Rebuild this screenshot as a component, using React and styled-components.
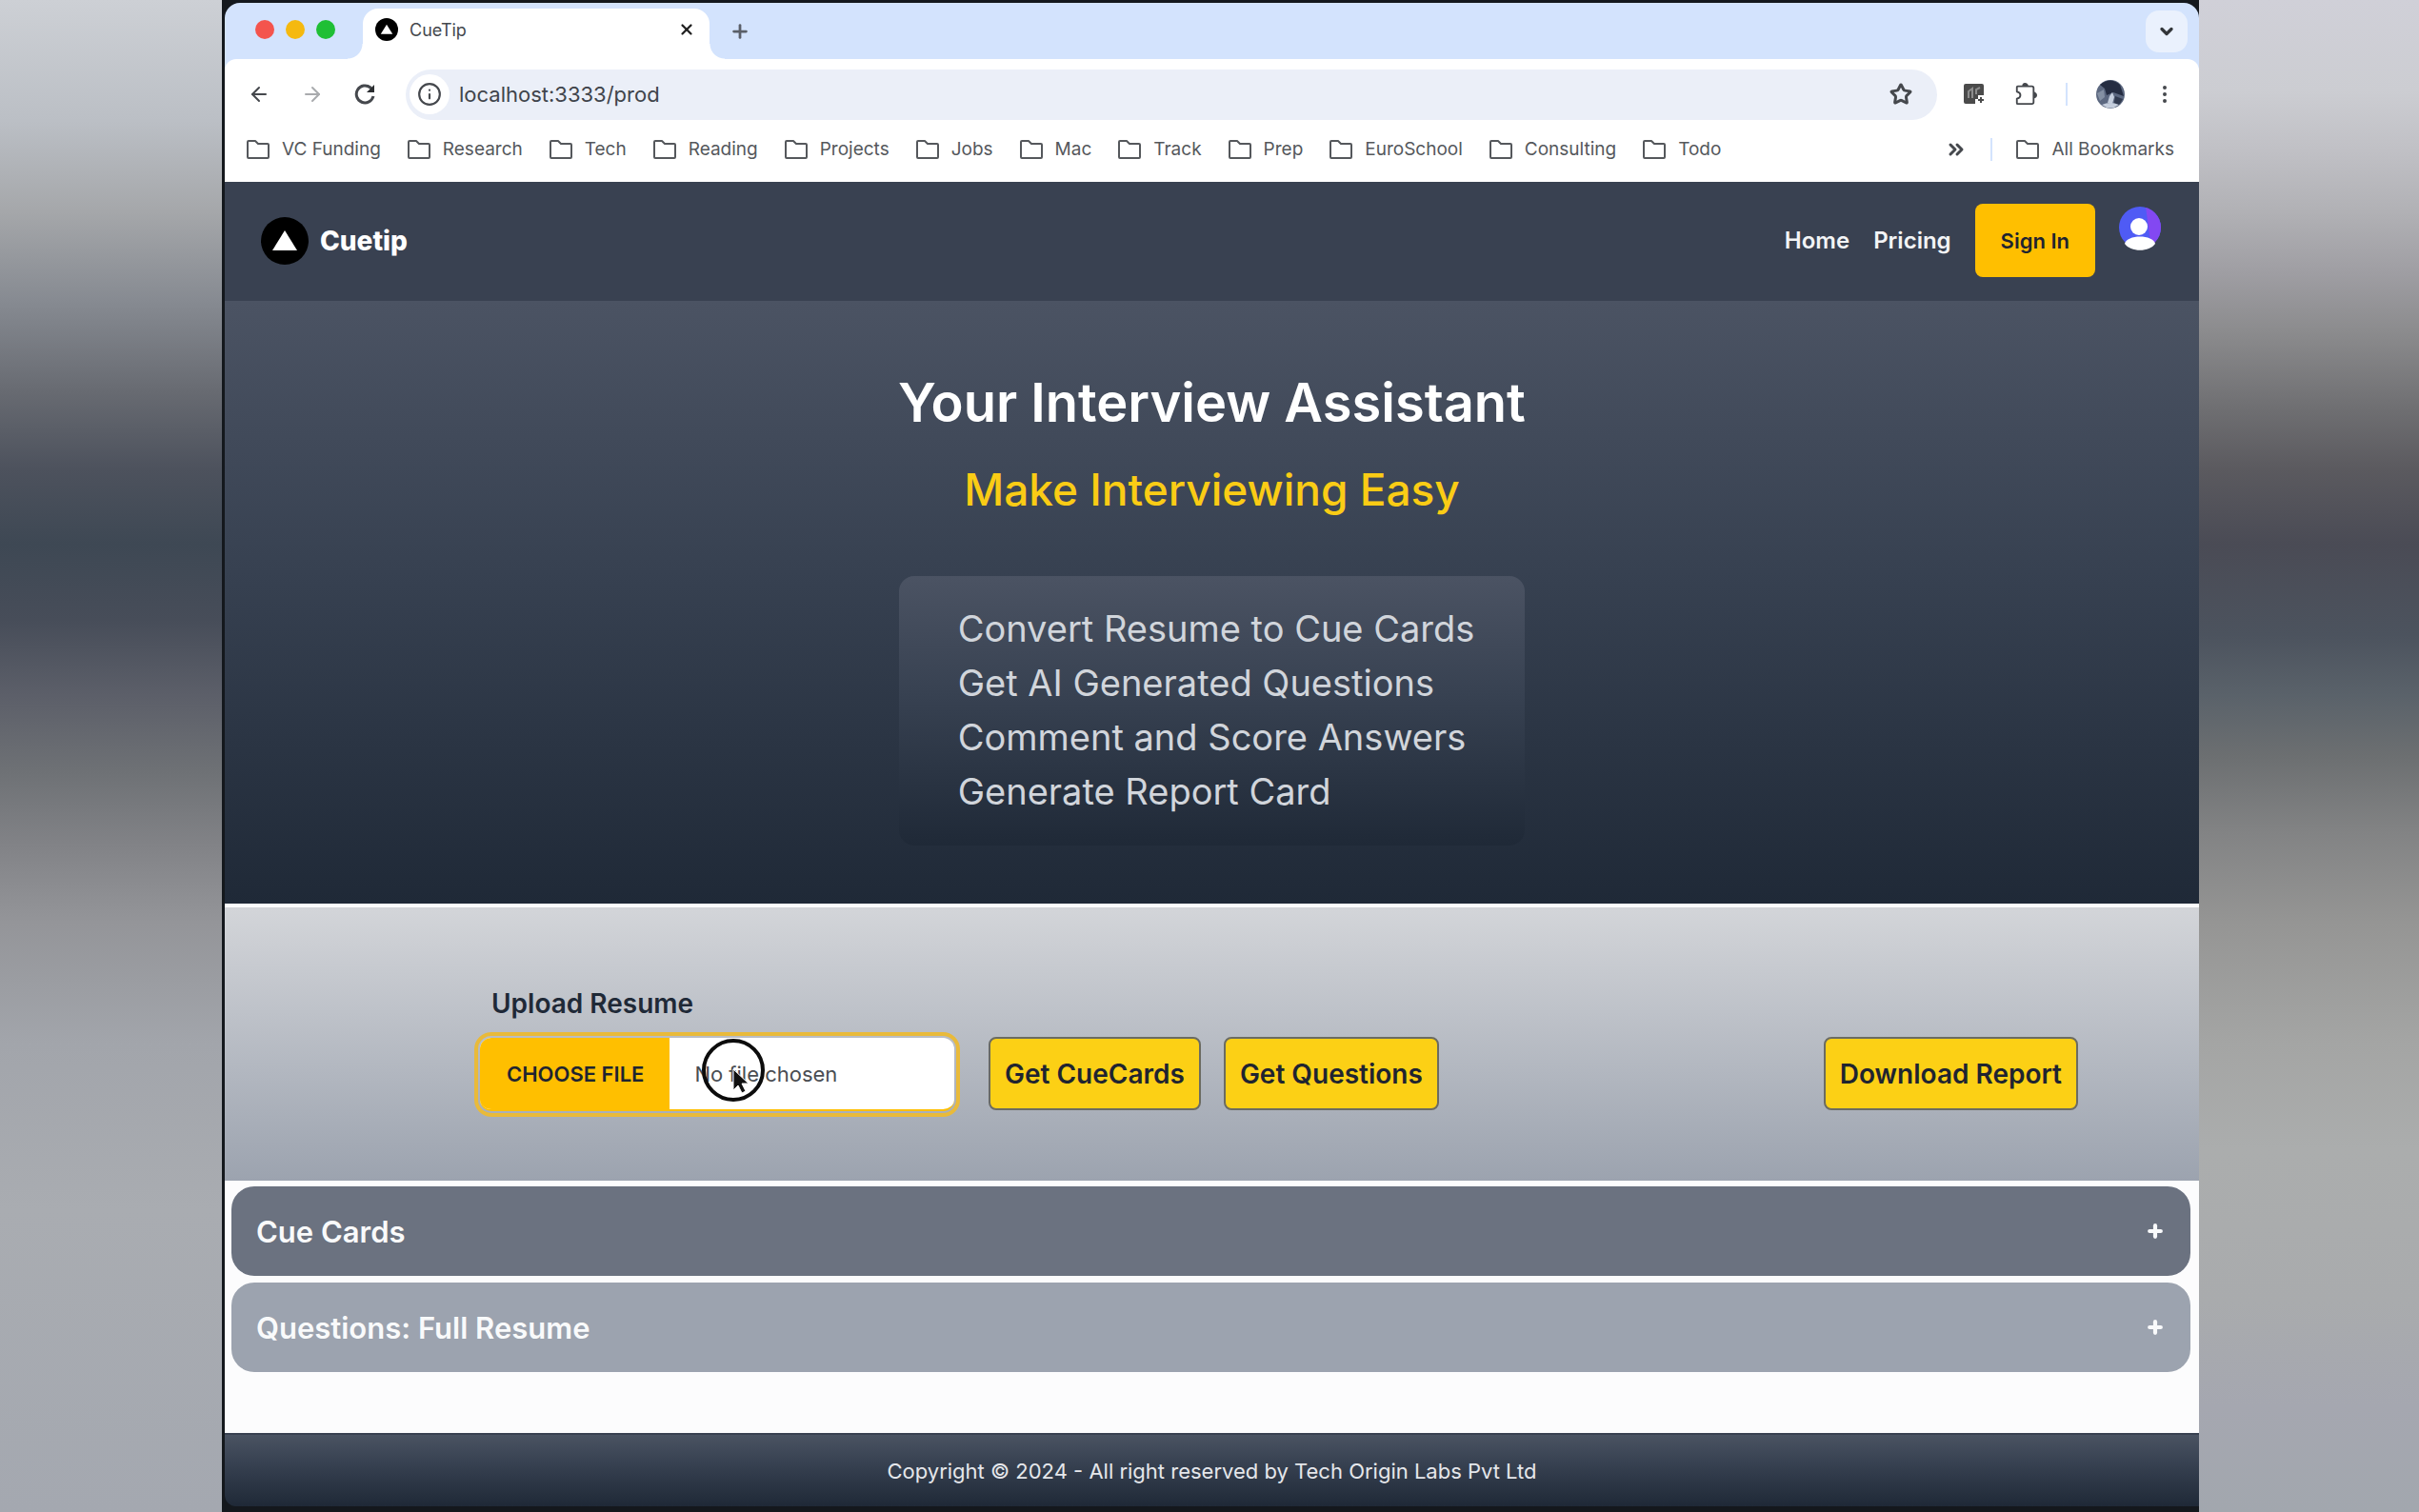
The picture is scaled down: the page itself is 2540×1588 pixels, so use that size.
import React, { useState } from 'react';
import styled, { createGlobalStyle } from 'styled-components';
import {
  ArrowLeft,
  ArrowRight,
  ChevronDown,
  ChevronsRight,
  EllipsisVertical,
  Info,
  Plus,
  Star,
  X,
} from 'lucide-react';

const GlobalStyle = createGlobalStyle`
  * {
    box-sizing: border-box;
  }

  body {
    margin: 0;
    font-family: Inter, 'Liberation Sans', sans-serif;
    background: #14181d;
  }

  button, input {
    font-family: inherit;
  }

  h1, h2, ul {
    margin: 0;
    padding: 0;
    font-weight: 400;
  }
`;

const StyledScreen = styled.div`
  display: grid;
  grid-template-columns: 233fr 2076fr 231fr;
  min-height: 100vh;
`;

const StyledLeftBackdrop = styled.div`
  background: linear-gradient(
    #cdd0d5 0%,
    #bbbfc5 8%,
    #a5a7aa 14%,
    #868a91 20%,
    #676a71 26%,
    #4d525d 31%,
    #3e4854 36%,
    #474d59 41%,
    #5c5f69 46%,
    #6e7175 51%,
    #828387 56%,
    #949599 61%,
    #a2a5ab 69%,
    #a9acb1 80%,
    #a4a8b0 100%
  );
`;

const StyledRightBackdrop = styled.div`
  background: linear-gradient(
    #d0d0d8 0%,
    #cccdd2 6%,
    #c0c0c5 10%,
    #b1b1b5 14%,
    #9f9ea3 18%,
    #8b8b8d 22%,
    #6f6f72 27%,
    #5b5a5f 31%,
    #4a4b55 36%,
    #4c535e 42%,
    #5a626a 46%,
    #6c6f71 50%,
    #828384 55%,
    #959594 61%,
    #a4a5a4 69%,
    #abadad 76%,
    #a9abad 86%,
    #a5a7b0 93%,
    #a2a7ae 100%
  );
`;

const StyledWindow = styled.div`
  display: flex;
  flex-direction: column;
  padding: 3px 0 6px 3px;
  background: #14181d;
`;

const StyledBrowser = styled.div`
  background: #d3e3fd;
  border-radius: 16px 16px 0 0;
  color: #45484d;
`;

const StyledTabStrip = styled.div`
  display: flex;
  align-items: flex-end;
  height: 59px;
  padding-right: 12px;
`;

const StyledLights = styled.div`
  display: flex;
  align-items: center;
  align-self: center;
  gap: 12px;
  width: 145px;
  padding: 0 0 3px 32px;
`;

const StyledLight = styled.span`
  width: 20px;
  height: 20px;
  border-radius: 50%;
  background: ${({ color }) => color};
`;

const StyledTab = styled.div`
  position: relative;
  display: flex;
  align-items: center;
  width: 364px;
  height: 53px;
  padding: 0 12px 9px 13px;
  border-radius: 16px 16px 0 0;
  background: #fff;
  font-size: 18px;

  &::before,
  &::after {
    content: '';
    position: absolute;
    bottom: 0;
    width: 16px;
    height: 16px;
  }

  &::before {
    right: 100%;
    background: radial-gradient(circle at 0 0, transparent 15px, #fff 16px);
  }

  &::after {
    left: 100%;
    background: radial-gradient(circle at 100% 0, transparent 15px, #fff 16px);
  }
`;

const StyledTabTitle = styled.span`
  flex: 1;
  margin-left: 12px;
`;

const StyledIconButton = styled.button`
  display: flex;
  align-items: center;
  justify-content: center;
  width: ${({ $size }) => $size || 24}px;
  height: ${({ $size }) => $size || 24}px;
  padding: 0;
  border: 0;
  border-radius: 50%;
  background: ${({ $bg }) => $bg || 'transparent'};
  color: ${({ $color }) => $color || '#45484d'};
`;

const StyledNewTab = styled.div`
  flex: 1;
  align-self: center;
  padding-left: 20px;
`;

const StyledTabSearch = styled.button`
  display: flex;
  align-items: center;
  justify-content: center;
  align-self: center;
  width: 44px;
  height: 44px;
  padding: 0;
  border: 0;
  border-radius: 14px;
  background: #eaf1fd;
  color: #33363a;
`;

const StyledToolbar = styled.div`
  display: flex;
  align-items: center;
  height: 74px;
  padding: 0 24px;
  border-radius: 12px 12px 0 0;
  background: #fff;
`;

const StyledNavButtons = styled.div`
  display: flex;
  gap: 32px;
  margin-right: 30px;
`;

const StyledAddress = styled.div`
  display: flex;
  align-items: center;
  flex: 1;
  height: 53px;
  padding: 0 26px 0 4px;
  border-radius: 27px;
  background: #ebeff8;
`;

const StyledUrl = styled.input`
  flex: 1;
  min-width: 0;
  padding: 0 10px;
  border: 0;
  background: transparent;
  color: #40444b;
  font-size: 22px;
`;

const StyledExtensions = styled.div`
  display: flex;
  align-items: center;
  gap: 30px;
  margin-left: 27px;
`;

const StyledDivider = styled.span`
  width: 2px;
  height: 24px;
  background: #d3e3fd;
`;

const StyledBookmarks = styled.div`
  display: flex;
  align-items: center;
  gap: 27px;
  height: 55px;
  padding: 0 26px 14px 22px;
  background: #fff;
`;

const StyledBookmarksEnd = styled.div`
  display: flex;
  align-items: center;
  gap: 24px;
  margin-left: auto;
`;

const StyledBookmark = styled.a`
  display: flex;
  align-items: center;
  gap: 12px;
  color: #55585c;
  font-size: 19px;
  text-decoration: none;
`;

const StyledNav = styled.header`
  display: flex;
  align-items: center;
  gap: 25px;
  height: 125px;
  padding: 0 40px 2px 38px;
  background: #394151;
`;

const StyledBrand = styled.a`
  display: flex;
  align-items: center;
  gap: 12px;
  margin-right: auto;
  color: #fff;
  font-size: 28px;
  font-weight: 800;
  text-decoration: none;
`;

const StyledNavLink = styled.a`
  color: #f3f4f6;
  font-size: 24px;
  font-weight: 600;
  text-decoration: none;
`;

const StyledSignIn = styled.button`
  height: 77px;
  padding: 0 27px;
  border: 0;
  border-radius: 8px;
  background: #ffbf00;
  color: #1f2430;
  font-size: 22px;
  font-weight: 600;
`;

const StyledAvatar = styled.button`
  align-self: flex-start;
  width: 44px;
  height: 46px;
  margin-top: 26px;
  padding: 0;
  border: 0;
  background: transparent;
`;

const StyledHero = styled.section`
  display: flex;
  flex-direction: column;
  align-items: center;
  height: 633px;
  padding-top: 71px;
  background: linear-gradient(#4b5363, #374151 45%, #1f2937);
`;

const StyledTitle = styled.h1`
  color: #fff;
  font-size: 56px;
  font-weight: 600;
  line-height: 72px;
`;

const StyledSubtitle = styled.h2`
  margin-top: 23px;
  color: #facc15;
  font-size: 46px;
  font-weight: 500;
  line-height: 64px;
`;

const StyledFeatures = styled.ul`
  margin-top: 59px;
  padding: 27px 53px 28px 62px;
  border-radius: 16px;
  background: linear-gradient(#4b5363, #374151 45%, #1f2937);
  color: #d1d5db;
  font-size: 38px;
  line-height: 57px;
  list-style: none;
`;

const StyledUpload = styled.section`
  display: flex;
  align-items: flex-end;
  gap: 24px;
  height: 291px;
  padding: 0 127px 67px 262px;
  border-top: 4px solid #fbfbfc;
  background: linear-gradient(#d3d5d9, #9ca3af);
`;

const StyledField = styled.label`
  display: flex;
  flex-direction: column;
  gap: 13px;
  width: 510px;
  margin-right: 6px;
  color: #1f2937;
  font-size: 28px;
  font-weight: 600;
`;

const StyledFieldName = styled.span`
  padding-left: 18px;
`;

const StyledFile = styled.span`
  position: relative;
  display: flex;
  height: 89px;
  padding: 2px;
  border: 4px solid #e9ba3a;
  border-radius: 18px;
  font-size: 22px;
`;

const StyledFileBox = styled.span`
  display: flex;
  align-items: center;
  flex: 1;
  overflow: hidden;
  border-bottom: 2px solid #ffbf00;
  border-radius: 12px;
  background: #fff;
`;

const StyledFileInput = styled.input`
  position: absolute;
  inset: 0;
  width: 100%;
  opacity: 0;
`;

const StyledFileButton = styled.span`
  display: flex;
  align-items: center;
  align-self: stretch;
  padding: 0 27px 0 28px;
  background: #ffbf00;
  color: #1f2430;
  font-weight: 600;
`;

const StyledFileName = styled.span`
  padding-left: 26px;
  color: #4a4d52;
  font-weight: 400;
`;

const StyledPointer = styled.svg`
  position: absolute;
  top: 2px;
  left: 234px;
`;

const StyledAction = styled.button`
  height: 77px;
  margin-bottom: 7px;
  padding: 0 15px;
  border: 2px solid #6b6b62;
  border-radius: 8px;
  background: #fcd015;
  color: #1f2430;
  font-size: 28px;
  font-weight: 600;

  &:last-child {
    margin-left: auto;
  }
`;

const StyledPanels = styled.main`
  display: flex;
  flex-direction: column;
  flex: 1;
  gap: 7px;
  padding: 6px 9px 0 7px;
  background: #fcfcfd;
`;

const StyledPanel = styled.button`
  display: flex;
  align-items: center;
  justify-content: space-between;
  height: 94px;
  padding: 0 27px 0 26px;
  border: 0;
  border-radius: 24px;
  background: ${({ $shade }) => $shade};
  color: #f9fafb;
  font-size: 31px;
  font-weight: 600;
`;

const StyledFooter = styled.footer`
  display: flex;
  align-items: center;
  justify-content: center;
  height: 77px;
  border-top: 2px solid #394151;
  border-radius: 0 0 0 12px;
  background: linear-gradient(#4a5362, #374151 40%, #1f2937);
  color: #e5e7eb;
  font-size: 22px;
`;

const bookmarks = [
  'VC Funding',
  'Research',
  'Tech',
  'Reading',
  'Projects',
  'Jobs',
  'Mac',
  'Track',
  'Prep',
  'EuroSchool',
  'Consulting',
  'Todo',
];

const features = [
  'Convert Resume to Cue Cards',
  'Get AI Generated Questions',
  'Comment and Score Answers',
  'Generate Report Card',
];

const panels = [
  { title: 'Cue Cards', shade: '#6b7280' },
  { title: 'Questions: Full Resume', shade: '#9ca3af' },
];

const Logo = ({ size }) => (
  <svg width={size} height={size} viewBox="0 0 50 50" aria-hidden="true">
    <circle cx="25" cy="25" r="25" fill="#000" />
    <path d="M25 14 L38 35 H12 Z" fill="#fff" />
  </svg>
);

const FolderIcon = () => (
  <svg width="26" height="22" viewBox="0 0 26 22" fill="none" aria-hidden="true">
    <path
      d="M2 3 Q2 2 3 2 H10 L13 5 H23 Q24 5 24 6 V19 Q24 20 23 20 H3 Q2 20 2 19 Z"
      stroke="#55585c"
      strokeWidth="2"
      strokeLinejoin="round"
    />
  </svg>
);

const PuzzleIcon = () => (
  <svg width="26" height="28" viewBox="0 0 26 28" fill="none" aria-hidden="true">
    <path
      d="M3 6 Q3 5 4 5 H20 Q22 5 22 7 V23 Q22 25 20 25 H4 Q3 25 3 24 V19 Q7 18 7 15 Q7 12 3 11 Z"
      stroke="#45484d"
      strokeWidth="2"
      strokeLinejoin="round"
    />
    <path d="M9 5 Q9 1 12 1 Q16 1 16 5 Z" fill="#45484d" />
    <path d="M22 11 Q26 12 26 15 Q26 18 22 19 Z" fill="#45484d" />
  </svg>
);

const ReloadIcon = () => (
  <svg width="24" height="24" viewBox="0 0 24 24" fill="none" aria-hidden="true">
    <path d="M20 14 A9 9 0 1 1 17 5 L19 7" stroke="#45484d" strokeWidth="3" />
    <path d="M21 2 V10 H13 Z" fill="#2b2d30" />
  </svg>
);

const UserIcon = () => (
  <svg width="44" height="46" viewBox="0 0 44 46" aria-hidden="true">
    <defs>
      <clipPath id="user">
        <circle cx="22" cy="22" r="22" />
      </clipPath>
    </defs>
    <g clipPath="url(#user)">
      <rect width="44" height="44" fill="#4f5bf5" />
      <path d="M28 0 H44 V44 H34 Z" fill="#8348f2" />
    </g>
    <circle cx="21" cy="21" r="9" fill="#fff" />
    <path d="M6 39 C8 29 36 29 38 39 C32 48 12 48 6 39 Z" fill="#fff" />
  </svg>
);

const ProfilePhoto = () => (
  <svg width="30" height="30" viewBox="0 0 30 30" aria-hidden="true">
    <circle cx="15" cy="15" r="15" fill="#5c6880" />
    <path d="M4 5 Q15 -4 25 5 L29 17 L18 13 L11 16 L9 9 Z" fill="#252d42" />
    <path d="M14 17 L17 13 L19 18 L17 25 L12 24 Z" fill="#c5cedd" />
    <path d="M20 17 L28 20 Q24 28 18 29 Z" fill="#323b50" />
    <path d="M1 14 L8 10 L9 18 L4 22 Z" fill="#8490a3" />
    <path d="M6 26 Q15 22 24 26 Q15 33 6 26 Z" fill="#c5cedd" />
  </svg>
);

const ClipExtension = () => (
  <svg width="24" height="24" viewBox="0 0 24 24" aria-hidden="true">
    <path d="M3 1 H20 Q22 1 22 3 V13 H16 V17 H13 V22 H3 Q1 22 1 20 V3 Q1 1 3 1 Z" fill="#4b4b4b" />
    <path d="M6 16 V9 L10 6 V16 M14 12 V7 L18 5" stroke="#8d8d8d" strokeWidth="2" fill="none" />
    <path d="M19 15 V21 M16 18 H22" stroke="#4b4b4b" strokeWidth="2" />
  </svg>
);

const Pointer = () => (
  <StyledPointer width="68" height="68" viewBox="0 0 68 68" aria-hidden="true">
    <circle cx="34" cy="34" r="31" fill="none" stroke="#0c0c0c" strokeWidth="4" />
    <path d="M34 33 V55 L39 50 L43 58 L47 56 L43 48 H50 Z" fill="#111" stroke="#fff" strokeWidth="1" />
  </StyledPointer>
);

const BrowserBar = () => (
  <StyledBrowser>
    <StyledTabStrip>
      <StyledLights>
        <StyledLight color="#f4544d" />
        <StyledLight color="#f5b90f" />
        <StyledLight color="#1fbf35" />
      </StyledLights>
      <StyledTab>
        <Logo size={24} />
        <StyledTabTitle>CueTip</StyledTabTitle>
        <StyledIconButton aria-label="Close tab" $color="#222">
          <X size={18} strokeWidth={3} />
        </StyledIconButton>
      </StyledTab>
      <StyledNewTab>
        <StyledIconButton aria-label="New tab" $color="#5a5f68">
          <Plus size={22} strokeWidth={3} />
        </StyledIconButton>
      </StyledNewTab>
      <StyledTabSearch aria-label="Search tabs">
        <ChevronDown size={20} strokeWidth={4} />
      </StyledTabSearch>
    </StyledTabStrip>

    <StyledToolbar>
      <StyledNavButtons>
        <StyledIconButton aria-label="Back">
          <ArrowLeft size={26} />
        </StyledIconButton>
        <StyledIconButton aria-label="Forward" $color="#a9abae">
          <ArrowRight size={26} />
        </StyledIconButton>
        <StyledIconButton aria-label="Reload">
          <ReloadIcon />
        </StyledIconButton>
      </StyledNavButtons>
      <StyledAddress>
        <StyledIconButton aria-label="Site information" $size={42} $bg="#fff">
          <Info size={26} />
        </StyledIconButton>
        <StyledUrl aria-label="Address" defaultValue="localhost:3333/prod" />
        <StyledIconButton aria-label="Bookmark this tab">
          <Star size={24} strokeWidth={3} />
        </StyledIconButton>
      </StyledAddress>
      <StyledExtensions>
        <StyledIconButton aria-label="Clipper">
          <ClipExtension />
        </StyledIconButton>
        <StyledIconButton aria-label="Extensions">
          <PuzzleIcon />
        </StyledIconButton>
        <StyledDivider />
        <StyledIconButton aria-label="Profile" $size={30}>
          <ProfilePhoto />
        </StyledIconButton>
        <StyledIconButton aria-label="Menu">
          <EllipsisVertical size={26} />
        </StyledIconButton>
      </StyledExtensions>
    </StyledToolbar>

    <StyledBookmarks>
      {bookmarks.map((name) => (
        <StyledBookmark key={name} href="#">
          <FolderIcon />
          {name}
        </StyledBookmark>
      ))}
      <StyledBookmarksEnd>
        <StyledIconButton aria-label="More bookmarks">
          <ChevronsRight size={24} strokeWidth={3} />
        </StyledIconButton>
        <StyledDivider />
        <StyledBookmark href="#">
          <FolderIcon />
          All Bookmarks
        </StyledBookmark>
      </StyledBookmarksEnd>
    </StyledBookmarks>
  </StyledBrowser>
);

const App = () => {
  const [fileName, setFileName] = useState('No file chosen');

  const pickFile = ({ target }) =>
    setFileName(target.files[0] ? target.files[0].name : 'No file chosen');

  return (
    <>
      <GlobalStyle />
      <StyledScreen>
        <StyledLeftBackdrop />
        <StyledWindow>
          <BrowserBar />

          <StyledNav>
            <StyledBrand href="#">
              <Logo size={50} />
              Cuetip
            </StyledBrand>
            <StyledNavLink href="#">Home</StyledNavLink>
            <StyledNavLink href="#">Pricing</StyledNavLink>
            <StyledSignIn>Sign In</StyledSignIn>
            <StyledAvatar aria-label="Account">
              <UserIcon />
            </StyledAvatar>
          </StyledNav>

          <StyledHero>
            <StyledTitle>Your Interview Assistant</StyledTitle>
            <StyledSubtitle>Make Interviewing Easy</StyledSubtitle>
            <StyledFeatures>
              {features.map((feature) => (
                <li key={feature}>{feature}</li>
              ))}
            </StyledFeatures>
          </StyledHero>

          <StyledUpload>
            <StyledField>
              <StyledFieldName>Upload Resume</StyledFieldName>
              <StyledFile>
                <StyledFileBox>
                  <StyledFileButton>CHOOSE FILE</StyledFileButton>
                  <StyledFileName>{fileName}</StyledFileName>
                </StyledFileBox>
                <StyledFileInput type="file" onChange={pickFile} />
                <Pointer />
              </StyledFile>
            </StyledField>
            <StyledAction>Get CueCards</StyledAction>
            <StyledAction>Get Questions</StyledAction>
            <StyledAction>Download Report</StyledAction>
          </StyledUpload>

          <StyledPanels>
            {panels.map(({ title, shade }) => (
              <StyledPanel key={title} $shade={shade}>
                {title}
                <Plus size={20} strokeWidth={5} />
              </StyledPanel>
            ))}
          </StyledPanels>

          <StyledFooter>
            Copyright © 2024 - All right reserved by Tech Origin Labs Pvt Ltd
          </StyledFooter>
        </StyledWindow>
        <StyledRightBackdrop />
      </StyledScreen>
    </>
  );
};

export default App;
